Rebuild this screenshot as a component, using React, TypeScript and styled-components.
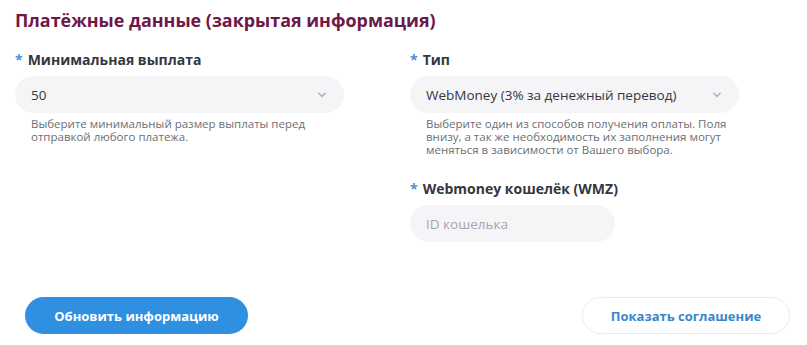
import React from 'react';
import styled, { createGlobalStyle } from 'styled-components';

const GlobalStyle = createGlobalStyle`
    body {
        margin: 0;
        background: #ffffff;
        font-family: "Open Sans", "Noto Sans", sans-serif;
    }
`

const Chevron = () => (
    <svg width='10' height='6' viewBox='0 0 10 6' fill='none'>
        <path d='M1.8 1.3 L5 4.4 L8.2 1.3' stroke='#b0b2b9' strokeWidth='1.5' strokeLinecap='round' strokeLinejoin='round' />
    </svg>
)

export default function App() {
    return (
        <>
            <GlobalStyle />
            <StyledPage>
                <Title>Платёжные данные (закрытая информация)</Title>
                <Columns>
                    <Column>
                        <Field>
                            <Label><Star>*</Star>Минимальная выплата</Label>
                            <Select>
                                <span>50</span>
                                <Chevron />
                            </Select>
                            <Hint>Выберите минимальный размер выплаты перед отправкой любого платежа.</Hint>
                        </Field>
                    </Column>
                    <Column>
                        <Field>
                            <Label><Star>*</Star>Тип</Label>
                            <Select>
                                <span>WebMoney (3% за денежный перевод)</span>
                                <Chevron />
                            </Select>
                            <Hint>Выберите один из способов получения оплаты. Поля внизу, а так же необходимость их заполнения могут меняться в зависимости от Вашего выбора.</Hint>
                        </Field>
                        <Field>
                            <Label><Star>*</Star>Webmoney кошелёк (WMZ)</Label>
                            <Input placeholder='ID кошелька' />
                        </Field>
                    </Column>
                </Columns>
                <Actions>
                    <PrimaryButton>Обновить информацию</PrimaryButton>
                    <OutlineButton>Показать соглашение</OutlineButton>
                </Actions>
            </StyledPage>
        </>
    );
}

const StyledPage = styled.div`
    width: 807px;
    height: 345px;
    box-sizing: border-box;
    padding: 6px 17px 0 15px;
    display: flex;
    flex-direction: column;
`

const Title = styled.h2`
    margin: 0;
    font-size: 17.9px;
    font-weight: 700;
    line-height: 28px;
    color: #6e1748;
`

const Columns = styled.div`
    display: grid;
    grid-template-columns: 329px 329px;
    column-gap: 66px;
    margin-top: 16px;
`

const Column = styled.div`
    display: flex;
    flex-direction: column;
    gap: 23px;
`

const Field = styled.div`
    display: flex;
    flex-direction: column;
    align-items: flex-start;
`

const Label = styled.div`
    font-size: 14px;
    font-weight: 700;
    line-height: 20px;
    color: #333740;
    margin-bottom: 6px;
`

const Star = styled.span`
    color: #4a90d9;
    margin-right: 5px;
`

const Select = styled.div`
    width: 100%;
    height: 37px;
    box-sizing: border-box;
    padding: 0 17px 0 16px;
    border-radius: 19px;
    background: #f5f5f7;
    display: flex;
    align-items: center;
    justify-content: space-between;
    font-size: 13.5px;
    color: #333740;
`

const Hint = styled.p`
    margin: 4px 0 0 16px;
    font-size: 11.5px;
    line-height: 13px;
    color: #6b6e75;
    max-width: 312px;
`

const Input = styled.input`
    width: 205px;
    height: 37px;
    box-sizing: border-box;
    padding: 0 16px;
    border: none;
    border-radius: 19px;
    background: #f5f5f7;
    font-family: inherit;
    font-size: 13.5px;
    outline: none;

    &::placeholder {
        color: #a4a7ae;
    }
`

const Actions = styled.div`
    margin-top: auto;
    margin-bottom: 11px;
    display: flex;
    justify-content: space-between;
    padding-left: 10px;
`

const PrimaryButton = styled.button`
    width: 223px;
    height: 37px;
    border: none;
    border-radius: 19px;
    background: #2f8fe0;
    color: #ffffff;
    font-family: inherit;
    font-size: 13px;
    font-weight: 700;
`

const OutlineButton = styled.button`
    width: 208px;
    height: 37px;
    border: 1px solid #ebecf0;
    border-radius: 19px;
    background: #ffffff;
    color: #3a86cc;
    font-family: inherit;
    font-size: 13px;
    font-weight: 700;
`
